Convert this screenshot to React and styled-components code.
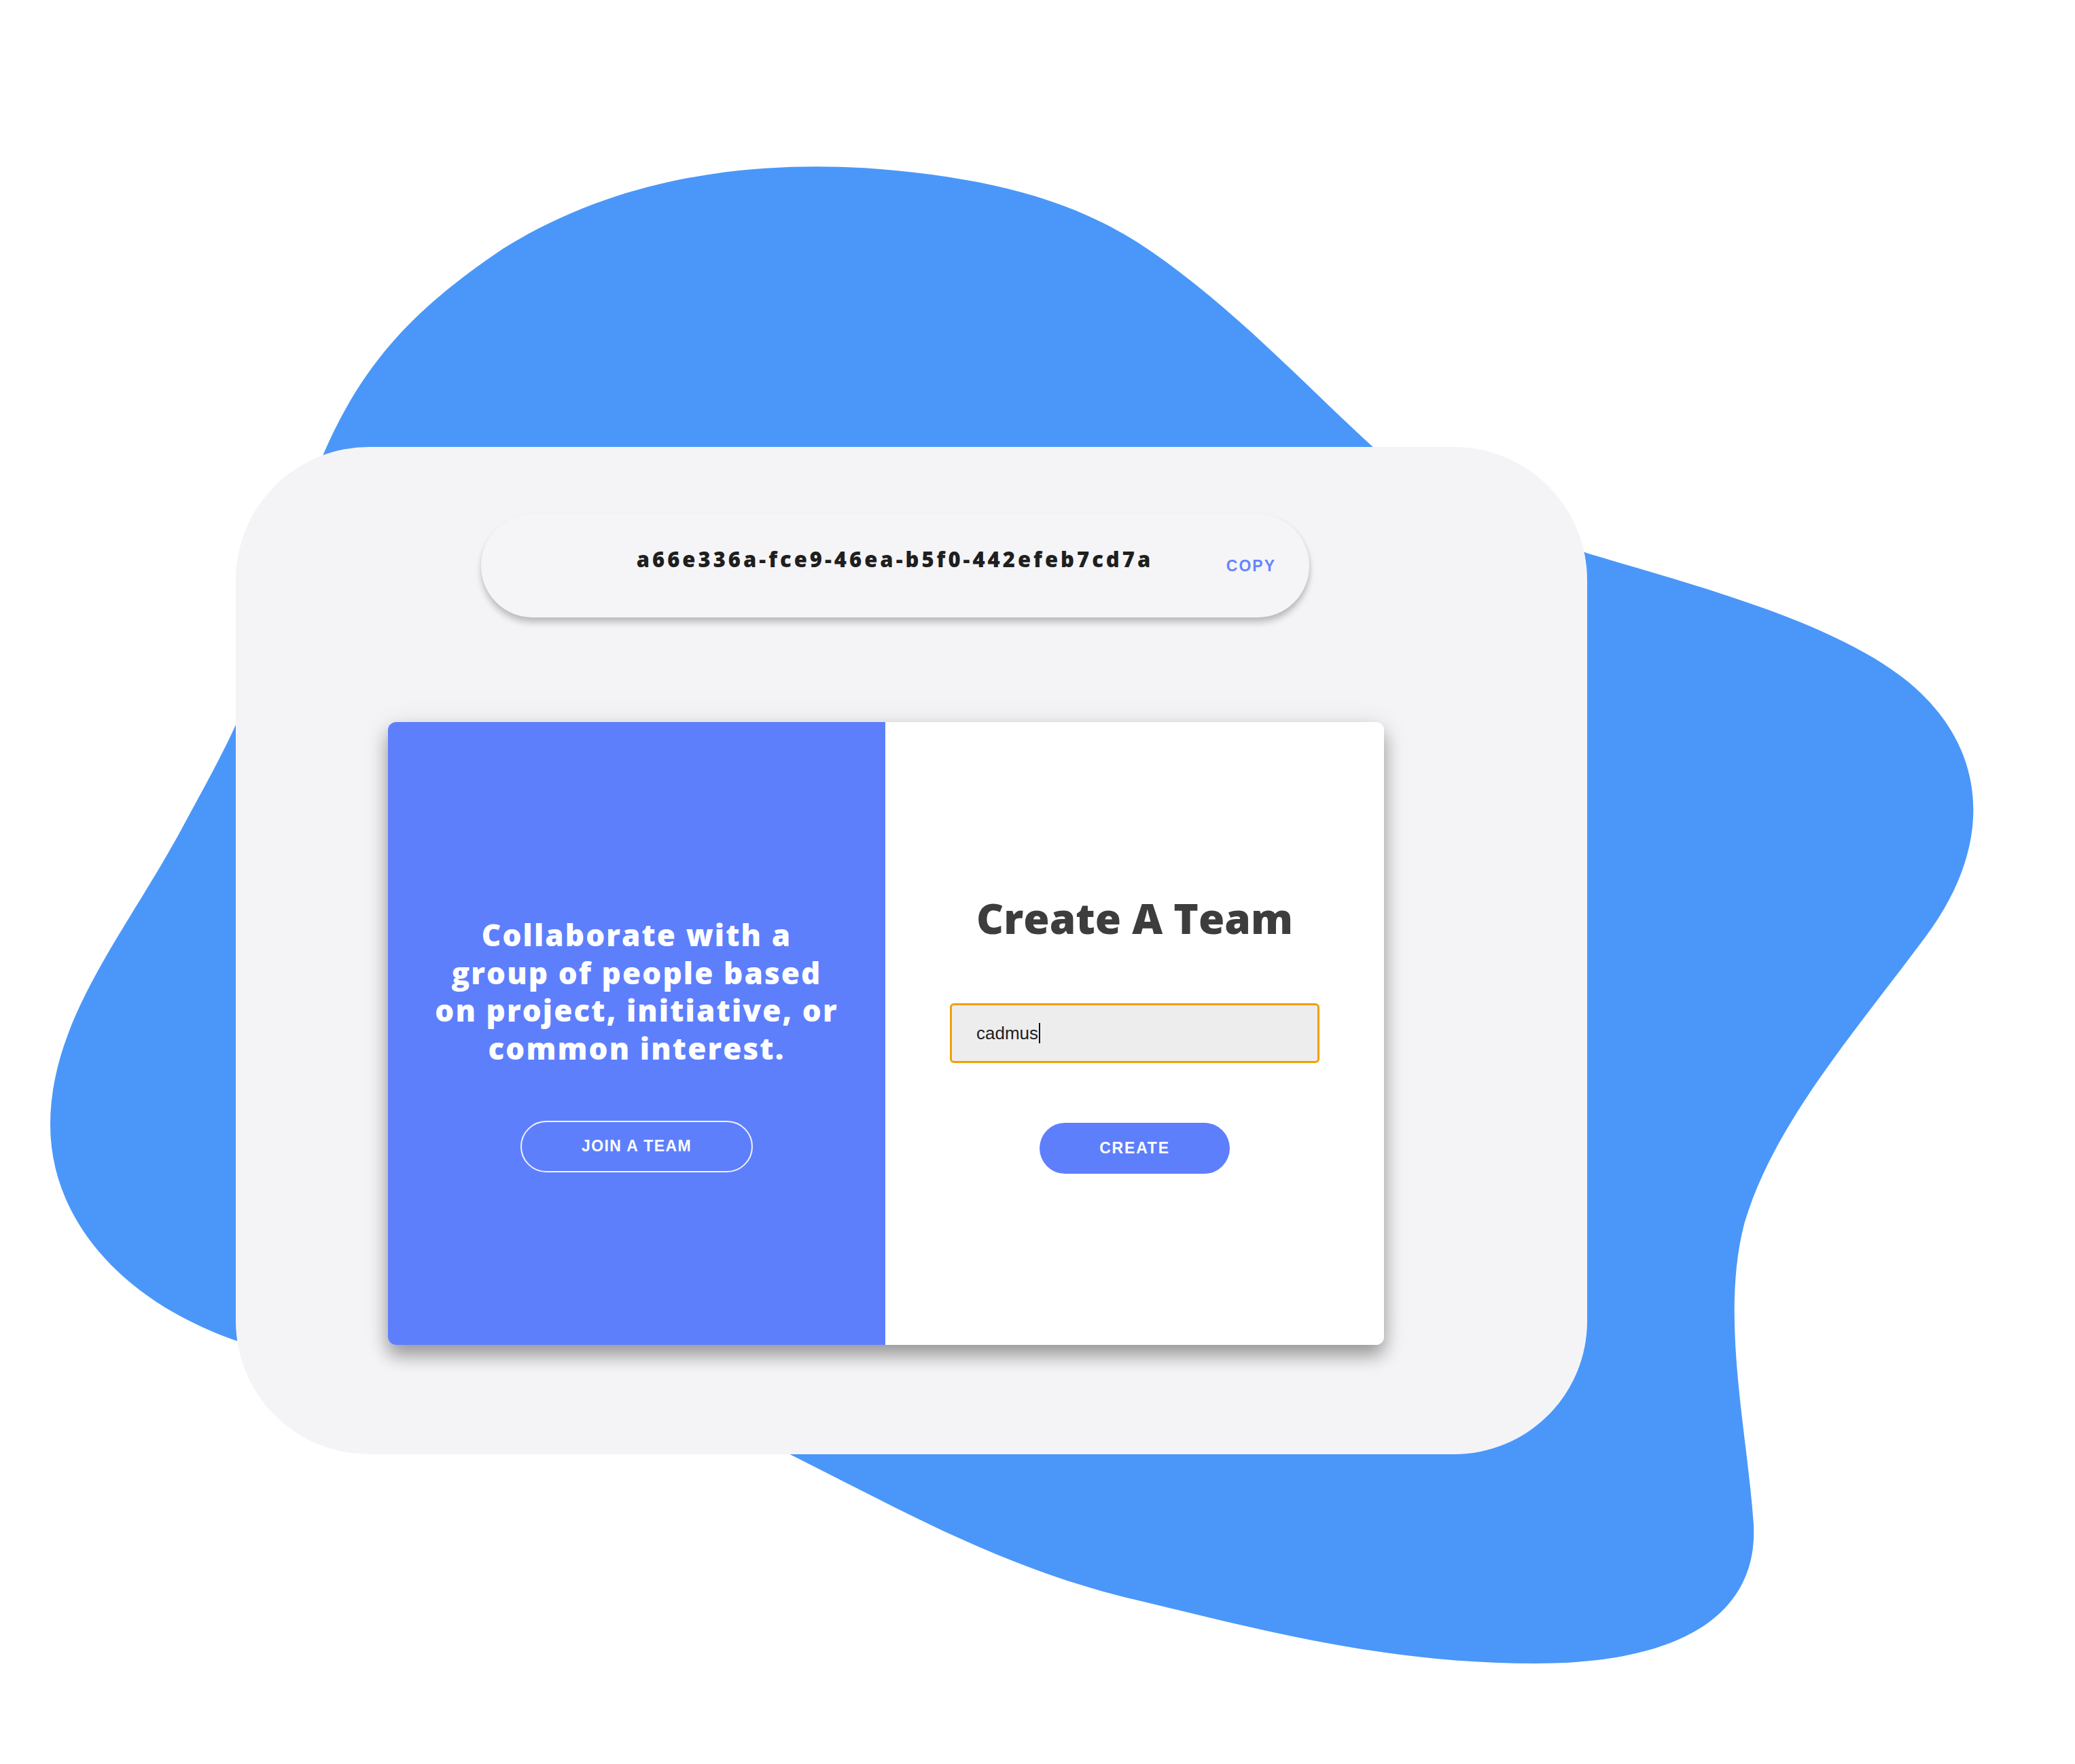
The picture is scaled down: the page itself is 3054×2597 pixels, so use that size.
import React from "react";
import styled, { createGlobalStyle } from "styled-components";

const GlobalStyle = createGlobalStyle`
  html, body {
    margin: 0;
    padding: 0;
    background: #ffffff;
  }
`;

const Page = styled.div`
  position: relative;
  width: 3054px;
  height: 2597px;
  overflow: hidden;
  box-sizing: border-box;
  padding: 658px 0 0 347px;
  background: #ffffff;
`;

const Blob = styled.svg`
  position: absolute;
  top: 0;
  left: 0;
  width: 3054px;
  height: 2597px;
`;

const Frame = styled.div`
  position: relative;
  box-sizing: border-box;
  width: 1989px;
  height: 1483px;
  border-radius: 196px;
  background: #f4f4f6;
  padding-top: 99px;
  display: flex;
  flex-direction: column;
  align-items: flex-start;
`;

const KeyPill = styled.div`
  box-sizing: border-box;
  margin-left: 361px;
  width: 1219px;
  height: 152px;
  border-radius: 76px;
  background: #f5f5f7;
  box-shadow: 0 8px 10px rgba(0, 0, 0, 0.2), 2px 2px 6px rgba(0, 0, 0, 0.06);
  display: grid;
  grid-template-columns: 1fr auto 1fr;
  align-items: center;
  padding-right: 49px;
`;

const TeamKey = styled.div`
  grid-column: 2;
  font-family: "Open Sans", "Noto Sans", sans-serif;
  font-weight: 800;
  font-size: 31px;
  letter-spacing: 4px;
  color: #1f1f1f;
  padding-bottom: 20px;
  margin-left: 48px;
`;

const CopyButton = styled.button`
  grid-column: 3;
  justify-self: end;
  border: 0;
  background: none;
  padding: 0;
  font-family: "Liberation Sans", Arial, sans-serif;
  font-weight: 700;
  font-size: 23px;
  letter-spacing: 2px;
  color: #6685fb;
  cursor: pointer;
`;

const Card = styled.div`
  margin: 154px 0 0 224px;
  width: 1466px;
  height: 917px;
  border-radius: 12px;
  overflow: hidden;
  display: grid;
  grid-template-columns: 732px 1fr;
  box-shadow: 0 16px 26px rgba(0, 0, 0, 0.33), 0 4px 40px rgba(0, 0, 0, 0.1);
`;

const Panel = styled.div`
  display: flex;
  flex-direction: column;
  align-items: center;
  box-sizing: border-box;
  padding-top: ${props => props.top}px;
  background: ${props => (props.accent ? "#5e7ffc" : "#ffffff")};
`;

const Blurb = styled.p`
  margin: 0;
  font-family: "Open Sans", "Noto Sans", sans-serif;
  font-weight: 800;
  font-size: 44px;
  letter-spacing: 2.1px;
  line-height: 55.7px;
  color: #ffffff;
  text-align: center;
`;

const Heading = styled.h1`
  margin: 0;
  font-family: "Open Sans", "Noto Sans", sans-serif;
  font-weight: 800;
  font-size: 62px;
  line-height: 76px;
  color: #3d3d3d;
`;

const PillButton = styled.button`
  box-sizing: border-box;
  margin-top: ${props => props.gap}px;
  width: ${props => props.width}px;
  height: ${props => (props.outline ? 76 : 75)}px;
  border-radius: 38px;
  border: ${props => (props.outline ? "2px solid rgba(255,255,255,0.9)" : "0")};
  background: ${props => (props.outline ? "transparent" : "#5e7ffc")};
  color: #ffffff;
  font-family: "Liberation Sans", Arial, sans-serif;
  font-weight: 700;
  font-size: 23px;
  letter-spacing: ${props => (props.outline ? 1.4 : 1.8)}px;
  padding: 0;
  cursor: pointer;
`;

const NameField = styled.div`
  box-sizing: border-box;
  margin-top: 88px;
  width: 544px;
  height: 88px;
  border: 3.5px solid #f0a000;
  border-radius: 6px;
  background: #ededed;
  display: flex;
  align-items: center;
  padding-left: 36px;
  font-family: "Liberation Sans", Arial, sans-serif;
  font-size: 26px;
  color: #1e1e1e;
`;

const Caret = styled.span`
  display: inline-block;
  width: 2px;
  height: 30px;
  background: #111;
  margin-left: 1px;
`;

export default function App() {
  return (
    <>
      <GlobalStyle />
      <Page>
        <Blob viewBox="0 0 1568 1333" preserveAspectRatio="none">
          <path
            fill="#4a97f9"
            d="M 244 344
               C 275 272, 315 232, 380 188
               C 470 132, 570 122, 655 127
               C 750 134, 815 152, 870 190
               C 935 235, 990 295, 1040 340
               L 1199 418
               C 1300 448, 1415 478, 1462 535
               C 1502 582, 1502 645, 1455 708
               C 1400 782, 1340 850, 1318 925
               C 1300 995, 1320 1080, 1325 1150
               C 1330 1220, 1270 1257, 1160 1257
               C 1040 1257, 940 1228, 850 1207
               C 750 1182, 670 1135, 595 1098
               L 178 1013
               C 90 982, 38 920, 38 850
               C 38 770, 95 705, 138 625
               C 157 590, 168 570, 178 548
               Z"
          />
        </Blob>
        <Frame>
          <KeyPill>
            <TeamKey>a66e336a-fce9-46ea-b5f0-442efeb7cd7a</TeamKey>
            <CopyButton>COPY</CopyButton>
          </KeyPill>
          <Card>
            <Panel accent top={286}>
              <Blurb>
                Collaborate with a<br />
                group of people based<br />
                on project, initiative, or<br />
                common interest.
              </Blurb>
              <PillButton outline gap={78} width={342}>
                JOIN A TEAM
              </PillButton>
            </Panel>
            <Panel top={250}>
              <Heading>Create A Team</Heading>
              <NameField>
                cadmus
                <Caret />
              </NameField>
              <PillButton gap={88} width={280}>
                CREATE
              </PillButton>
            </Panel>
          </Card>
        </Frame>
      </Page>
    </>
  );
}
